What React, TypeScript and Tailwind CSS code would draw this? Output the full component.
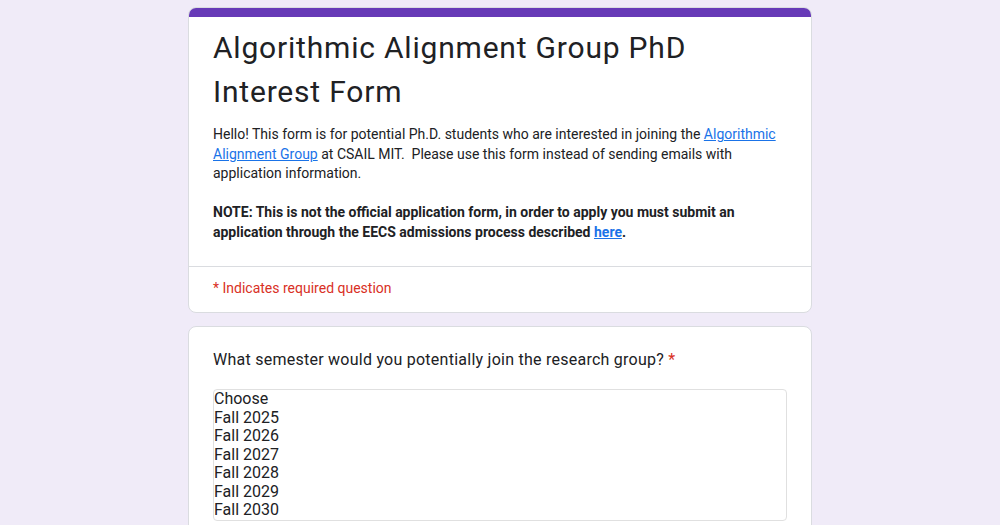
import React from "react";

export default function App() {
  const options = ["Choose", "Fall 2025", "Fall 2026", "Fall 2027", "Fall 2028", "Fall 2029", "Fall 2030"];
  return (
    <div className="min-h-[525px] w-full bg-[#f0ebf8] pt-[7px] font-['Roboto',sans-serif] text-[#202124]">
      <div className="mx-auto w-[624px] flex flex-col gap-[13px]">
        <div className="rounded-lg bg-white border border-[#dadce0] overflow-hidden">
          <div className="h-[10px] bg-[#673ab7] -mt-px -mx-px" />
          <div className="px-6 pt-[9px] pb-6">
            <h1 className="text-[30px] leading-[44px] font-normal tracking-[0.8px] text-[#202124]">
              Algorithmic Alignment Group PhD Interest Form
            </h1>
            <div className="mt-[11px] text-[14px] leading-[19.5px] text-[#202124]">
              <p>
                Hello! This form is for potential Ph.D. students who are interested in joining the{" "}
                <a href="#" className="text-[#1a73e8] underline">Algorithmic Alignment Group</a> at CSAIL MIT.&nbsp; Please use this form instead of sending emails with application information.
              </p>
              <p className="h-[19.5px]" />
              <p className="font-bold">
                NOTE: This is not the official application form, in order to apply you must submit an application through the EECS admissions process described{" "}
                <a href="#" className="text-[#1a73e8] underline">here</a>.
              </p>
            </div>
          </div>
          <div className="border-t border-[#dadce0] px-6 pt-[11px] pb-[14px]">
            <p className="text-[14px] leading-5 text-[#d93025]">* Indicates required question</p>
          </div>
        </div>
        <div className="rounded-lg bg-white border border-[#dadce0] px-6 pt-[21px] pb-6">
          <p className="text-[16px] leading-6 tracking-[0.25px] text-[#202124]">
            What semester would you potentially join the research group? <span className="text-[#d93025]">*</span>
          </p>
          <div className="mt-[17px] border border-[#e0e0e0] rounded-[4px]">
            {options.map((o) => (
              <div key={o} className="text-[16px] leading-[18.5px] text-[#202124]">{o}</div>
            ))}
          </div>
        </div>
      </div>
    </div>
  );
}
